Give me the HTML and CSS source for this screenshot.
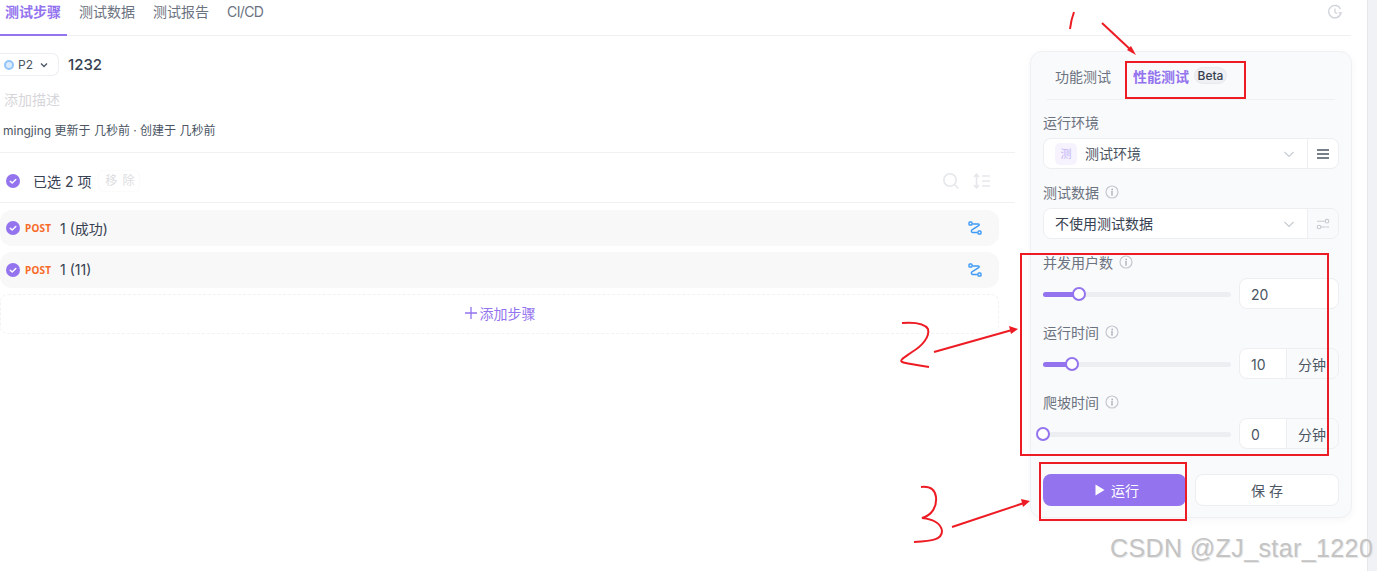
FILE: index.html
```html
<!DOCTYPE html>
<html lang="zh-CN">
<head>
<meta charset="utf-8">
<title>测试步骤</title>
<link rel="stylesheet" href="styles.css">
</head>
<body>
<svg width="0" height="0" class="defs">
  <symbol id="check" viewBox="0 0 14 14"><circle cx="7" cy="7" r="7" fill="#9373ee"/><path d="M4.200 7.200l2 1.900 3.600-3.700" fill="none" stroke="#fff" stroke-width="1.400" stroke-linecap="round" stroke-linejoin="round"/></symbol>
  <symbol id="route" viewBox="0 0 14 14"><rect x="1" y="1" width="3" height="3" rx=".8" fill="none" stroke="#3f9bf5" stroke-width="1.400"/><rect x="10" y="10" width="3" height="3" rx=".8" fill="none" stroke="#3f9bf5" stroke-width="1.400"/><path d="M5 3h5c1.400 0 1.600 1 .6 1.700L4 8.800c-1 .8-.8 2.700.6 2.700H9" fill="none" stroke="#3f9bf5" stroke-width="1.400" stroke-linecap="round"/></symbol>
  <symbol id="info" viewBox="0 0 14 14"><circle cx="7" cy="7" r="6" fill="none" stroke="#c4c8ce" stroke-width="1.200"/><circle cx="7.200" cy="4.400" r=".85" fill="#a8adb5"/><path d="M7 6.400v3.800" stroke="#a8adb5" stroke-width="1.300" stroke-linecap="round"/></symbol>
  <symbol id="chevron" viewBox="0 0 12 12"><path d="M1.500 4l4.500 4.500L10.500 4" fill="none" stroke="#c6cad0" stroke-width="1.100"/></symbol>
</svg>

<div class="page">
  <div class="content">
    <header class="topbar">
      <nav class="tabs">
        <span class="tab tab-active">测试步骤</span>
        <span class="tab">测试数据</span>
        <span class="tab">测试报告</span>
        <span class="tab tab-latin">CI/CD</span>
      </nav>
      <svg class="history" width="16" height="16" viewBox="0 0 16 16"><path d="M13.800 9.500A6.200 6.200 0 1 1 13.500 5" fill="none" stroke="#d1d5db" stroke-width="1.500"/><path d="M8 4.500v4l2.500 1" fill="none" stroke="#d1d5db" stroke-width="1.300"/><path d="M11.300 8.200h4.400l-2.200 2.600z" fill="#d1d5db"/></svg>
    </header>

    <div class="body">
      <main class="main">
        <div class="title-row">
          <div class="priority">
            <span class="dot"></span><span>P2</span>
            <svg width="10" height="10" viewBox="0 0 10 10"><path d="M2 3.500l3 3 3-3" fill="none" stroke="#4b5563" stroke-width="1.300"/></svg>
          </div>
          <h1 class="title">1232</h1>
        </div>
        <p class="desc">添加描述</p>
        <p class="meta">mingjing 更新于 几秒前 · 创建于 几秒前</p>

        <div class="toolbar">
          <svg class="check" width="14" height="14"><use href="#check"/></svg>
          <span class="selected">已选 2 项</span>
          <span class="remove">移 除</span>
          <span class="spacer"></span>
          <svg width="18" height="18" viewBox="0 0 18 18"><circle cx="8" cy="8" r="6.200" fill="none" stroke="#e5e7eb" stroke-width="1.600"/><path d="M12.500 12.500l4 4" stroke="#e5e7eb" stroke-width="1.600"/></svg>
          <svg class="sort" width="18" height="16" viewBox="0 0 18 16"><path d="M3.500 1.500v13M1 4l2.500-2.800L6 4M1 12l2.500 2.800L6 12" fill="none" stroke="#e5e7eb" stroke-width="1.600"/><path d="M9 3h8M9 8h8M9 13h8" stroke="#e5e7eb" stroke-width="1.600"/></svg>
        </div>

        <div class="steps">
          <div class="step">
            <svg width="14" height="14"><use href="#check"/></svg>
            <span class="method">POST</span>
            <span class="step-name">1 (成功)</span>
            <span class="spacer"></span>
            <svg width="14" height="14"><use href="#route"/></svg>
          </div>
          <div class="step">
            <svg width="14" height="14"><use href="#check"/></svg>
            <span class="method">POST</span>
            <span class="step-name">1 (11)</span>
            <span class="spacer"></span>
            <svg width="14" height="14"><use href="#route"/></svg>
          </div>
          <div class="add-step">
            <svg width="14" height="14" viewBox="0 0 14 14"><path d="M7 1v12M1 7h12" stroke="#9373ee" stroke-width="1.300"/></svg>
            <span>添加步骤</span>
          </div>
        </div>
      </main>

      <aside class="panel">
        <div class="panel-tabs">
          <span class="ptab">功能测试</span>
          <span class="ptab ptab-active">性能测试</span>
          <span class="beta">Beta</span>
        </div>

        <div class="field">
          <label class="label">运行环境</label>
          <div class="select">
            <div class="select-main">
              <span class="env-icon">测</span>
              <span class="select-text">测试环境</span>
              <svg class="chev" width="12" height="12"><use href="#chevron"/></svg>
            </div>
            <div class="select-side">
              <svg width="14" height="12" viewBox="0 0 14 12"><path d="M1 2h12M1 6h12M1 10h12" stroke="#4b5563" stroke-width="1.300"/></svg>
            </div>
          </div>
        </div>

        <div class="field">
          <label class="label">测试数据<svg class="info" width="14" height="14"><use href="#info"/></svg></label>
          <div class="select">
            <div class="select-main">
              <span class="select-text select-text-dark">不使用测试数据</span>
              <svg class="chev" width="12" height="12"><use href="#chevron"/></svg>
            </div>
            <div class="select-side select-side-off">
              <svg width="14" height="12" viewBox="0 0 14 12"><path d="M1 3.200h8M9.500 9H13" stroke="#c6cad0" stroke-width="1.100"/><circle cx="11" cy="3.200" r="1.800" fill="none" stroke="#c6cad0" stroke-width="1.100"/><circle cx="3" cy="9" r="1.800" fill="none" stroke="#c6cad0" stroke-width="1.100"/><path d="M5 9h4" stroke="#c6cad0" stroke-width="1.100"/></svg>
            </div>
          </div>
        </div>

        <div class="field">
          <label class="label">并发用户数<svg class="info" width="14" height="14"><use href="#info"/></svg></label>
          <div class="slider-row">
            <div class="slider"><div class="fill" style="width:36px"><span class="thumb"></span></div></div>
            <div class="num"><span class="num-value">20</span></div>
          </div>
        </div>

        <div class="field">
          <label class="label">运行时间<svg class="info" width="14" height="14"><use href="#info"/></svg></label>
          <div class="slider-row">
            <div class="slider"><div class="fill" style="width:29px"><span class="thumb"></span></div></div>
            <div class="num"><span class="num-value">10</span><span class="unit">分钟</span></div>
          </div>
        </div>

        <div class="field">
          <label class="label">爬坡时间<svg class="info" width="14" height="14"><use href="#info"/></svg></label>
          <div class="slider-row">
            <div class="slider"><div class="fill" style="width:0"><span class="thumb"></span></div></div>
            <div class="num"><span class="num-value">0</span><span class="unit">分钟</span></div>
          </div>
        </div>

        <div class="actions">
          <button class="btn btn-run"><svg width="10" height="12" viewBox="0 0 10 12"><path d="M0.500 0.500L9.500 6 0.500 11.500z" fill="#fff"/></svg>运行</button>
          <button class="btn btn-save">保 存</button>
        </div>
      </aside>
    </div>
  </div>
  <div class="scrollbar"></div>
</div>

<svg class="annotations" width="1377" height="571" viewBox="0 0 1377 571">
  <g fill="none" stroke="#ed1c24" stroke-width="2">
    <path d="M1074 12Q1071 20 1070 29"/>
    <path d="M1102 23L1133 52"/>
    <rect x="1126" y="62" width="119" height="36"/>
    <path d="M902 323C915 322 925 324 928 329C930 337 922 346 912 352C905 357 899 360 902 362C908 364 918 365 929 367"/>
    <path d="M934 352L1012 330"/>
    <rect x="1021" y="254" width="307" height="201"/>
    <path d="M921 487C930 486 935 490 936 497C937 507 932 515 922 518C932 519 941 523 942 531C942 539 934 541 914 542"/>
    <path d="M952 527L1024 503"/>
    <rect x="1040" y="463" width="146" height="57"/>
  </g>
  <g fill="#ed1c24">
    <path d="M1136 55L1127 50 1131 46z"/>
    <path d="M1018 329L1009 326 1011 334z"/>
    <path d="M1030 501L1021 499 1023 507z"/>
  </g>
</svg>
<div class="watermark">CSDN @ZJ_star_1220</div>
</body>
</html>
```

FILE: styles.css
```css
* { box-sizing: border-box; }
html, body { margin: 0; padding: 0; height: 571px; overflow: hidden; background: #fff; }
body { font-family: Inter, "Noto Sans CJK SC", sans-serif; font-size: 14px; color: #374151; position: relative; }
.defs { position: absolute; }
p, h1 { margin: 0; }
svg { flex: none; display: block; }

.page { display: flex; height: 571px; }
.content { width: 1352px; margin-right: 15px; flex: none; }
.scrollbar { flex: 1; background: #f1f2f6; border-left: 1px solid #e5e7eb; }

.topbar { height: 36px; margin-right: 1px; border-bottom: 1px solid #eef0f2; display: flex; justify-content: space-between; }
.tabs { display: flex; gap: 7px; }
.tab { padding: 2px 6px 0 5px; height: 36px; line-height: 20px; color: #6b7280; border-bottom: 2px solid transparent; }
.tab-latin { letter-spacing: -0.600px; }
.tab-active { color: #9373ee; font-weight: 600; border-bottom-color: #9373ee; }
.history { margin: 4px 8px 0 0; }

.body { display: flex; }
.main { width: 1015px; flex: none; }

.title-row { display: flex; align-items: center; gap: 9px; margin-top: 17px; height: 23px; }
.priority { display: flex; align-items: center; width: 59px; height: 23px; border: 1px solid #eceef1; border-left: none; border-radius: 0 7px 7px 0; font-size: 12px; color: #4b5563; padding-left: 4px; }
.priority svg { margin-left: 6px; }
.dot { width: 10px; height: 10px; border-radius: 50%; background: #dbeafe; border: 2px solid #93c5fd; margin-right: 4px; }
.title { font-size: 15px; font-weight: 500; color: #374151; line-height: 23px; }
.desc { margin: 14px 0 0 4px; line-height: 20px; color: #d6d6da; font-size: 14px; }
.meta { margin: 12px 0 0 3px; line-height: 18px; font-size: 12px; color: #4b5563; }

.toolbar { display: flex; align-items: center; height: 51px; margin-top: 12px; padding: 6px 24px 0 6px; border-top: 1px solid #f0f1f3; border-bottom: 1px solid #f0f1f3; }
.selected { margin-left: 13px; font-size: 14px; color: #374151; }
.remove { margin-left: 7px; width: 42px; height: 22px; line-height: 20px; padding-left: 2px; text-align: center; letter-spacing: 1px; border: 1px solid #fbfbfb; border-radius: 6px; font-size: 12px; color: #dcdde0; }
.spacer { flex: 1; }
.sort { margin-left: 13px; }

.steps { width: 999px; margin-top: 7px; display: flex; flex-direction: column; gap: 6px; }
.step { height: 36px; display: flex; align-items: center; background: #f8f8f8; border-radius: 12px; padding: 0 17px 0 6px; }
.method { margin-left: 5px; font-size: 10px; font-weight: 700; letter-spacing: .2px; color: #f76b28; width: 35px; font-family: "Noto Sans", sans-serif; }
.step-name { font-size: 14px; color: #374151; margin-bottom: 1px; }
.add-step { height: 40px; padding-bottom: 2px; display: flex; align-items: center; justify-content: center; gap: 2px; border: 1px dashed #f1f2f4; border-radius: 8px; font-size: 14px; color: #9373ee; }

.panel { width: 322px; height: 467px; margin: 15px 0 0 15px; flex: none; background: #f9fafb; border: 1px solid #eef0f3; border-radius: 12px; box-shadow: 0 2px 8px rgba(0,0,0,.04); padding: 0 12px; }
.panel-tabs { height: 48px; margin: 0 4px; display: flex; align-items: center; border-bottom: 1px solid #eef0f3; padding: 0 0 0 8px; }
.ptab { color: #6b7280; margin-right: 22px; }
.ptab-active { color: #9373ee; font-weight: 600; margin-right: 5px; }
.beta { width: 33px; height: 17px; line-height: 15px; text-align: center; font-size: 12px; font-weight: 500; color: #374151; background: #eff0f3; border: 1px solid #e7e9ec; border-radius: 9px; }

.field { margin-top: 13px; }
.panel-tabs + .field { margin-top: 12px; }
.label { display: flex; align-items: center; height: 20px; color: #6b7280; font-size: 14px; margin-bottom: 6px; }
.info { margin-left: 6px; }
.select { display: flex; height: 31px; background: #fff; border: 1px solid #eceef1; border-radius: 8px; overflow: hidden; }
.select-main { flex: 1; display: flex; align-items: center; padding: 0 12px 0 11px; }
.select-text { flex: 1; margin-bottom: 2px; color: #4b5563; }
.select-text-dark { color: #374151; }
.env-icon { width: 22px; height: 22px; line-height: 22px; text-align: center; border-radius: 5px; background: #f6f3ff; color: #c4b5f5; font-size: 11px; margin-right: 8px; }
.select-side { width: 31px; border-left: 1px solid #eceef1; display: flex; align-items: center; justify-content: center; }
.select-side-off { background: #f9fafb; }

.slider-row { display: flex; align-items: center; gap: 8px; }
.slider { flex: 1; height: 5px; margin-top: 1px; background: #eceef2; border-radius: 3px; }
.fill { position: relative; height: 5px; background: #9373ee; border-radius: 3px; }
.thumb { position: absolute; right: -7px; top: -4.500px; width: 14px; height: 14px; background: #fff; border: 2px solid #9373ee; border-radius: 50%; }
.num { width: 100px; height: 31px; display: flex; background: #fff; border: 1px solid #eceef1; border-radius: 8px; overflow: hidden; color: #4b5563; line-height: 31px; }
.num-value { flex: 1; padding-left: 11px; }
.unit { width: 52px; padding-left: 11px; border-left: 1px solid #eceef1; background: #f9fafb; }

.actions { display: flex; gap: 9px; margin-top: 25px; }
.btn { height: 32px; font-family: inherit; font-size: 14px; border-radius: 8px; display: flex; align-items: center; justify-content: center; gap: 6px; padding: 0 0 1px; }
.btn-run { width: 143px; flex: none; background: #9373ee; border: none; color: #fff; padding-left: 5px; }
.btn-save { flex: 1; background: #fff; border: 1px solid #eceef1; color: #4b5563; }

.annotations { position: absolute; left: 0; top: 0; pointer-events: none; }
.watermark { position: absolute; left: 1110px; top: 533px; font-family: "Liberation Sans", sans-serif; font-size: 25px; line-height: 30px; letter-spacing: .4px; color: #c4c4c4; text-shadow: 1px 1px 0 #e8e8e8; white-space: nowrap; }
```
